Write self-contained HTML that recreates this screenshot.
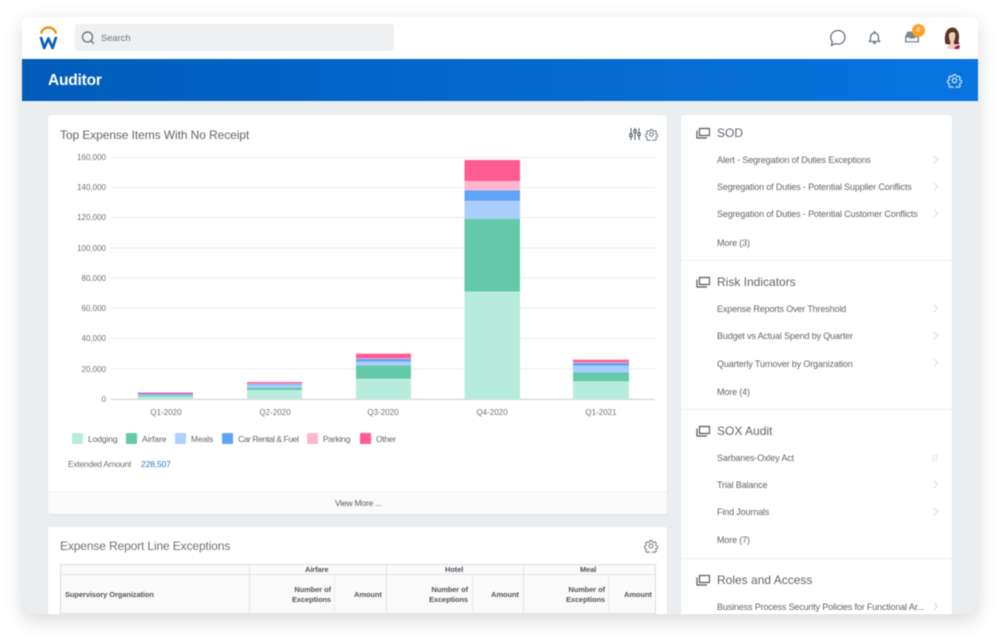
<!DOCTYPE html>
<html><head><meta charset="utf-8"><style>
*{box-sizing:border-box}
html,body{margin:0;padding:0;width:1000px;height:642px;overflow:hidden;background:#fff;font-family:"Liberation Sans",sans-serif}
#shadow{position:absolute;left:22px;top:17px;width:956px;height:597px;border-radius:6px;background:#ebeef0;box-shadow:0 6px 20px rgba(0,0,0,.15)}
#win{position:absolute;left:22px;top:17px;width:956px;height:597px;background:#ebeef0;border-radius:6px 6px 4px 4px}
#clip{position:absolute;left:0;top:0;width:1000px;height:614px;overflow:hidden;filter:blur(.4px)}
.a{position:absolute;white-space:nowrap}
.card{position:absolute;background:#fff;border-radius:3px;box-shadow:0 1px 2px rgba(0,0,0,.05)}
.t{position:absolute;white-space:nowrap;color:#666e75}
.li{font-size:9px;color:#5e666d;left:717px;letter-spacing:-.145px}
.h{font-size:12px;color:#5e666d;left:717px}
.yl{position:absolute;left:60px;width:46px;text-align:right;font-size:8px;line-height:10px;color:#6b7278}
.xl{position:absolute;width:70px;text-align:center;font-size:8px;line-height:10px;color:#6b7278}
.lg{font-size:8.5px;color:#5e666d;letter-spacing:-.1px}
.sw{position:absolute;width:11px;height:11px;border-radius:1px}
.th{position:absolute;font-size:7.5px;font-weight:bold;color:#50565c;white-space:nowrap;letter-spacing:-.1px}
.r{text-align:right;line-height:9.5px}
.ln{position:absolute;background:#e0e2e4}
</style></head><body>
<div id="shadow"></div>
<div id="clip">
<div id="win"></div>
<div class="a" style="left:22px;top:17px;width:956px;height:42px;background:#fff;border-radius:6px 6px 0 0"></div>
<div class="a" style="left:22px;top:59px;width:956px;height:42px;background:linear-gradient(90deg,#005cb9,#0875e1)"></div>

<svg class="a" style="left:36px;top:24px" width="26" height="26" viewBox="0 0 26 26"><path d="M5 9.500C6 5.500 9 3.500 12.500 3.500S19 5.500 20 9.500" fill="none" stroke="#f38b00" stroke-width="2.300"/><path d="M4.800 13l3.400 11 4.200-9.500L16.600 24l3.600-11" fill="none" stroke="#0b5cb5" stroke-width="2.700" stroke-linejoin="round"/></svg>

<div class="a" style="left:75px;top:24px;width:319px;height:27px;background:#eef0f2;border-radius:3px"></div>
<svg class="a" style="left:81px;top:31px" width="14" height="14" viewBox="0 0 14 14"><circle cx="6.500" cy="6" r="5" fill="none" stroke="#5e6a75" stroke-width="1.200"/><path d="M10 9.800l2.800 3" stroke="#5e6a75" stroke-width="1.200"/></svg>
<div class="t" style="left:101px;top:33px;font-size:9.500px;color:#6f777e;letter-spacing:-.1px">Search</div>

<svg class="a" style="left:829px;top:29px" width="18" height="18" viewBox="0 0 18 18"><path d="M9 1.500c4.100 0 7 2.900 7 6.800s-3 6.800-7 6.800c-1 0-1.900-.1-2.700-.5L2.500 16.300l.8-3.500C2.300 11.600 1.800 10 1.800 8.300 1.800 4.400 4.900 1.500 9 1.500z" fill="none" stroke="#6a747d" stroke-width="1.300"/></svg>
<svg class="a" style="left:867px;top:30px" width="15" height="15" viewBox="0 0 15 15"><path d="M2.300 11.500c1-1 1.300-2 1.300-4 0-2.500 1.500-4.500 3.900-4.500s3.900 2 3.900 4.500c0 2 .3 3 1.300 4z" fill="none" stroke="#6a747d" stroke-width="1.300" stroke-linejoin="round"/><path d="M6 13h3M7.500 1v2" stroke="#6a747d" stroke-width="1.500"/></svg>
<svg class="a" style="left:904px;top:30px" width="16" height="14" viewBox="0 0 16 14"><path d="M3.500 1.500h9l2.500 5v6H1v-6z" fill="#7b8690"/><rect x="2.300" y="7.500" width="11.400" height="3.800" fill="#f3f5f6"/><rect x="5.500" y="6" width="5" height="2.500" fill="#7b8690"/></svg>
<div class="a" style="left:912px;top:24px;width:13px;height:13px;border-radius:50%;background:#ffa126;color:#fff;font-size:7px;line-height:13px;text-align:center">8</div>

<svg class="a" style="left:942px;top:26px" width="20" height="23" viewBox="0 0 20 23"><path d="M3.500 18C2 12 3 2 10 1.500s8 9.500 6.500 13.500l1 3-6 1z" fill="#5a3426"/><path d="M7 8c1-2 4.500-2.500 6-1 .6 3 .3 6-1 8l-.3 2c1 1.500 3 2 4 3l-1.500 3H6l-1-2.500c1-1.200 3-1 3.300-3V15.500C7.300 13.500 6.600 11 7 8z" fill="#f0cfba"/><path d="M13 21l3.500-2 1.500 .8-1 3.200h-5z" fill="#a31d4b"/></svg>

<div class="a" style="left:48px;top:72px;font-size:15.500px;font-weight:bold;color:#fff;line-height:18px;letter-spacing:-.2px">Auditor</div>
<svg class="a" style="left:947px;top:73px" width="15" height="15" viewBox="0 0 24 24" fill="none" stroke="#e4effb" stroke-width="1.800"><circle cx="12" cy="12" r="3.500"/><path d="M10 1.500h4l.6 3 2.300 1 2.600-1.600 2.800 2.800-1.600 2.600 1 2.300 3 .6v4l-3 .6-1 2.300 1.600 2.600-2.800 2.800-2.600-1.600-2.300 1-.6 3h-4l-.6-3-2.300-1-2.600 1.600-2.800-2.800 1.600-2.600-1-2.300-3-.6v-4l3-.6 1-2.300-1.600-2.600 2.800-2.800 2.600 1.600 2.300-1z" transform="translate(1.200 1.200) scale(.9)"/></svg>

<!-- Left card 1 -->
<div class="card" style="left:48px;top:115px;width:619px;height:399px"></div>
<div class="t" style="left:60px;top:128px;font-size:12px;color:#5e666d;letter-spacing:-.09px">Top Expense Items With No Receipt</div>
<svg class="a" style="left:629px;top:127px" width="12" height="14" viewBox="0 0 12 14" stroke="#4f5961" stroke-width="1" fill="#fff"><path d="M2 1v12M6 1v12M10 1v12"/><rect x=".8" y="7" width="2.400" height="2.600"/><rect x="4.800" y="3" width="2.400" height="2.600"/><rect x="8.800" y="6" width="2.400" height="2.600"/></svg>
<svg class="a" style="left:645px;top:128px" width="13" height="13" viewBox="0 0 24 24" fill="none" stroke="#6a737b" stroke-width="1.800"><circle cx="12" cy="12" r="3.500"/><path d="M10 1.500h4l.6 3 2.300 1 2.600-1.600 2.800 2.800-1.600 2.600 1 2.300 3 .6v4l-3 .6-1 2.300 1.600 2.600-2.800 2.800-2.600-1.600-2.300 1-.6 3h-4l-.6-3-2.300-1-2.600 1.600-2.800-2.800 1.600-2.600-1-2.300-3-.6v-4l3-.6 1-2.300-1.600-2.600 2.800-2.800 2.600 1.600 2.300-1z" transform="translate(1.200 1.200) scale(.9)"/></svg>

<svg class="a" style="left:0;top:0" width="1000" height="614">
<g stroke="#ecedef" stroke-width="1"><path d="M111 157.500H655M111 187.500H655M111 217.500H655M111 248H655M111 278H655M111 308H655M111 338.500H655M111 369H655"/></g>
<path d="M111 399.300H655" stroke="#d5d8dc" stroke-width="1.300"/>
<g>
<rect x="138" y="395.500" width="55" height="3.500" fill="#b7ecdc"/><rect x="138" y="395" width="55" height="1.500" fill="#64c9a9"/><rect x="138" y="394.500" width="55" height="1.200" fill="#a9cefc"/><rect x="138" y="393.500" width="55" height="1" fill="#5fa4f7"/><rect x="138" y="392.500" width="55" height="1" fill="#ff5c93"/>
<rect x="247" y="390" width="55" height="9" fill="#b7ecdc"/><rect x="247" y="387.700" width="55" height="2.300" fill="#64c9a9"/><rect x="247" y="384.700" width="55" height="3" fill="#a9cefc"/><rect x="247" y="383.700" width="55" height="1" fill="#5fa4f7"/><rect x="247" y="382.800" width="55" height="1" fill="#ffb6d0"/><rect x="247" y="382" width="55" height="1.300" fill="#ff5c93"/>
<rect x="356" y="378.700" width="55" height="20.300" fill="#b7ecdc"/><rect x="356" y="365.300" width="55" height="13.400" fill="#64c9a9"/><rect x="356" y="361.700" width="55" height="3.600" fill="#a9cefc"/><rect x="356" y="359" width="55" height="2.700" fill="#5fa4f7"/><rect x="356" y="358" width="55" height="1" fill="#ffb6d0"/><rect x="356" y="353.700" width="55" height="4.500" fill="#ff5c93"/>
<rect x="464.500" y="291.500" width="55.500" height="107.500" fill="#b7ecdc"/><rect x="464.500" y="218.700" width="55.500" height="72.800" fill="#64c9a9"/><rect x="464.500" y="200.700" width="55.500" height="18" fill="#a9cefc"/><rect x="464.500" y="190.300" width="55.500" height="10.400" fill="#5fa4f7"/><rect x="464.500" y="181" width="55.500" height="9.300" fill="#ffb6d0"/><rect x="464.500" y="160" width="55.500" height="21" fill="#ff5c93"/>
<rect x="573" y="381.300" width="56" height="17.700" fill="#b7ecdc"/><rect x="573" y="372.500" width="56" height="8.800" fill="#64c9a9"/><rect x="573" y="365.700" width="56" height="6.800" fill="#a9cefc"/><rect x="573" y="363" width="56" height="2.700" fill="#5fa4f7"/><rect x="573" y="362" width="56" height="1" fill="#ffb6d0"/><rect x="573" y="359.700" width="56" height="2.500" fill="#ff5c93"/>
</g>
</svg>
<div class="yl" style="top:153px">160,000</div><div class="yl" style="top:183px">140,000</div><div class="yl" style="top:213px">120,000</div><div class="yl" style="top:244px">100,000</div><div class="yl" style="top:274px">80,000</div><div class="yl" style="top:304px">60,000</div><div class="yl" style="top:334px">40,000</div><div class="yl" style="top:365px">20,000</div><div class="yl" style="top:395px">0</div>
<div class="xl" style="left:131px;top:408px">Q1-2020</div><div class="xl" style="left:240px;top:408px">Q2-2020</div><div class="xl" style="left:348px;top:408px">Q3-2020</div><div class="xl" style="left:457px;top:408px">Q4-2020</div><div class="xl" style="left:566px;top:408px">Q1-2021</div>

<div class="sw" style="left:72px;top:433px;background:#b7ecdc"></div><div class="t lg" style="left:88px;top:434px">Lodging</div>
<div class="sw" style="left:126px;top:433px;background:#64c9a9"></div><div class="t lg" style="left:142px;top:434px">Airfare</div>
<div class="sw" style="left:175px;top:433px;background:#b0d0fd"></div><div class="t lg" style="left:191px;top:434px">Meals</div>
<div class="sw" style="left:222px;top:433px;background:#5fa4f7"></div><div class="t lg" style="left:238px;top:434px;letter-spacing:-.42px">Car Rental &amp; Fuel</div>
<div class="sw" style="left:307px;top:433px;background:#ffb6d0"></div><div class="t lg" style="left:323px;top:434px;letter-spacing:-.25px">Parking</div>
<div class="sw" style="left:360px;top:433px;background:#ff5c93"></div><div class="t lg" style="left:376px;top:434px;letter-spacing:-.3px">Other</div>
<div class="t" style="left:68px;top:459px;font-size:8.500px;color:#6b7278;letter-spacing:-.27px">Extended Amount</div>
<div class="t" style="left:141px;top:459px;font-size:8.500px;color:#2a78c6;letter-spacing:-.15px">228,507</div>
<div class="a" style="left:48px;top:491px;width:619px;height:23px;background:#fafafa;border-top:1px solid #f1f2f3;border-radius:0 0 3px 3px"></div>
<div class="t" style="left:335px;top:498px;font-size:8.500px;color:#555c62;letter-spacing:-.22px">View More ...</div>

<!-- Left card 2 -->
<div class="card" style="left:48px;top:527px;width:619px;height:90px"></div>
<div class="t" style="left:60px;top:539px;font-size:12px;color:#6b7278;letter-spacing:-.13px">Expense Report Line Exceptions</div>
<svg class="a" style="left:644px;top:539px" width="14" height="14" viewBox="0 0 24 24" fill="none" stroke="#6a737b" stroke-width="1.700"><circle cx="12" cy="12" r="3.500"/><path d="M10 1.500h4l.6 3 2.300 1 2.600-1.600 2.800 2.800-1.600 2.600 1 2.300 3 .6v4l-3 .6-1 2.300 1.600 2.600-2.800 2.800-2.600-1.600-2.300 1-.6 3h-4l-.6-3-2.300-1-2.600 1.600-2.800-2.800 1.600-2.600-1-2.300-3-.6v-4l3-.6 1-2.300-1.600-2.600 2.800-2.800 2.600 1.600 2.300-1z" transform="translate(1.200 1.200) scale(.9)"/></svg>
<div class="a" style="left:60px;top:564px;width:596px;height:50px;background:#fafafa;border:1px solid #dcdedf"></div>
<div class="ln" style="left:60px;top:574px;width:596px;height:1px"></div>
<div class="ln" style="left:249px;top:564px;width:1px;height:50px"></div>
<div class="ln" style="left:386px;top:564px;width:1px;height:50px"></div>
<div class="ln" style="left:523px;top:564px;width:1px;height:50px"></div>
<div class="ln" style="left:334px;top:575px;width:1px;height:39px;background:#ececec"></div>
<div class="ln" style="left:472px;top:575px;width:1px;height:39px;background:#ececec"></div>
<div class="ln" style="left:608px;top:575px;width:1px;height:39px;background:#ececec"></div>
<div class="th" style="left:305px;top:565px">Airfare</div>
<div class="th" style="left:445px;top:565px">Hotel</div>
<div class="th" style="left:580px;top:565px">Meal</div>
<div class="th" style="left:65px;top:590px">Supervisory Organization</div>
<div class="th r" style="left:262px;top:585px;width:69px">Number of<br>Exceptions</div>
<div class="th" style="left:354px;top:590px">Amount</div>
<div class="th r" style="left:399px;top:585px;width:69px">Number of<br>Exceptions</div>
<div class="th" style="left:491px;top:590px">Amount</div>
<div class="th r" style="left:536px;top:585px;width:69px">Number of<br>Exceptions</div>
<div class="th" style="left:624px;top:590px">Amount</div>

<!-- Right card -->
<div class="card" style="left:681px;top:115px;width:271px;height:502px"></div>
<div class="a" style="left:681px;top:260px;width:271px;height:1px;background:#eff0f1"></div>
<div class="a" style="left:681px;top:409px;width:271px;height:1px;background:#eff0f1"></div>
<div class="a" style="left:681px;top:558px;width:271px;height:1px;background:#eff0f1"></div>

<svg width="0" height="0" style="position:absolute"><defs>
<g id="ic"><path d="M3.500 1.500h10v7h-10z M1 3.500v7.500h10" fill="none" stroke="#4f5961" stroke-width="1.200"/></g>
<g id="ch"><path d="M1 1l3.500 3.500L1 8" fill="none" stroke="#d8dbde" stroke-width="1"/></g>
</defs></svg>

<svg class="a" style="left:696px;top:127px" width="14" height="12"><use href="#ic"/></svg>
<div class="t h" style="top:126px">SOD</div>
<div class="t li" style="top:155px">Alert - Segregation of Duties Exceptions</div>
<div class="t li" style="top:182px">Segregation of Duties - Potential Supplier Conflicts</div>
<div class="t li" style="top:209px">Segregation of Duties - Potential Customer Conflicts</div>
<div class="t li" style="top:238px">More (3)</div>
<svg class="a" style="left:933px;top:155px" width="6" height="9"><use href="#ch"/></svg>
<svg class="a" style="left:933px;top:182px" width="6" height="9"><use href="#ch"/></svg>
<svg class="a" style="left:933px;top:209px" width="6" height="9"><use href="#ch"/></svg>

<svg class="a" style="left:696px;top:276px" width="14" height="12"><use href="#ic"/></svg>
<div class="t h" style="top:275px">Risk Indicators</div>
<div class="t li" style="top:304px">Expense Reports Over Threshold</div>
<div class="t li" style="top:331px">Budget vs Actual Spend by Quarter</div>
<div class="t li" style="top:359px">Quarterly Turnover by Organization</div>
<div class="t li" style="top:387px">More (4)</div>
<svg class="a" style="left:933px;top:304px" width="6" height="9"><use href="#ch"/></svg>
<svg class="a" style="left:933px;top:331px" width="6" height="9"><use href="#ch"/></svg>
<svg class="a" style="left:933px;top:358px" width="6" height="9"><use href="#ch"/></svg>

<svg class="a" style="left:696px;top:425px" width="14" height="12"><use href="#ic"/></svg>
<div class="t h" style="top:424px">SOX Audit</div>
<div class="t li" style="top:453px">Sarbanes-Oxley Act</div>
<div class="t li" style="top:480px">Trial Balance</div>
<div class="t li" style="top:507px">Find Journals</div>
<div class="t li" style="top:535px">More (7)</div>
<svg class="a" style="left:932px;top:455px" width="6" height="6" viewBox="0 0 6 6"><path d="M3 .8H.6v4.600h4.600V3M2.500 3.500L5.400.6M3.600.5h1.900v1.900" fill="none" stroke="#dcdfe1" stroke-width=".7"/></svg>
<svg class="a" style="left:933px;top:480px" width="6" height="9"><use href="#ch"/></svg>
<svg class="a" style="left:933px;top:507px" width="6" height="9"><use href="#ch"/></svg>

<svg class="a" style="left:696px;top:574px" width="14" height="12"><use href="#ic"/></svg>
<div class="t h" style="top:573px">Roles and Access</div>
<div class="t li" style="top:602px">Business Process Security Policies for Functional Ar...</div>
<svg class="a" style="left:933px;top:602px" width="6" height="9"><use href="#ch"/></svg>
</div>
</body></html>
